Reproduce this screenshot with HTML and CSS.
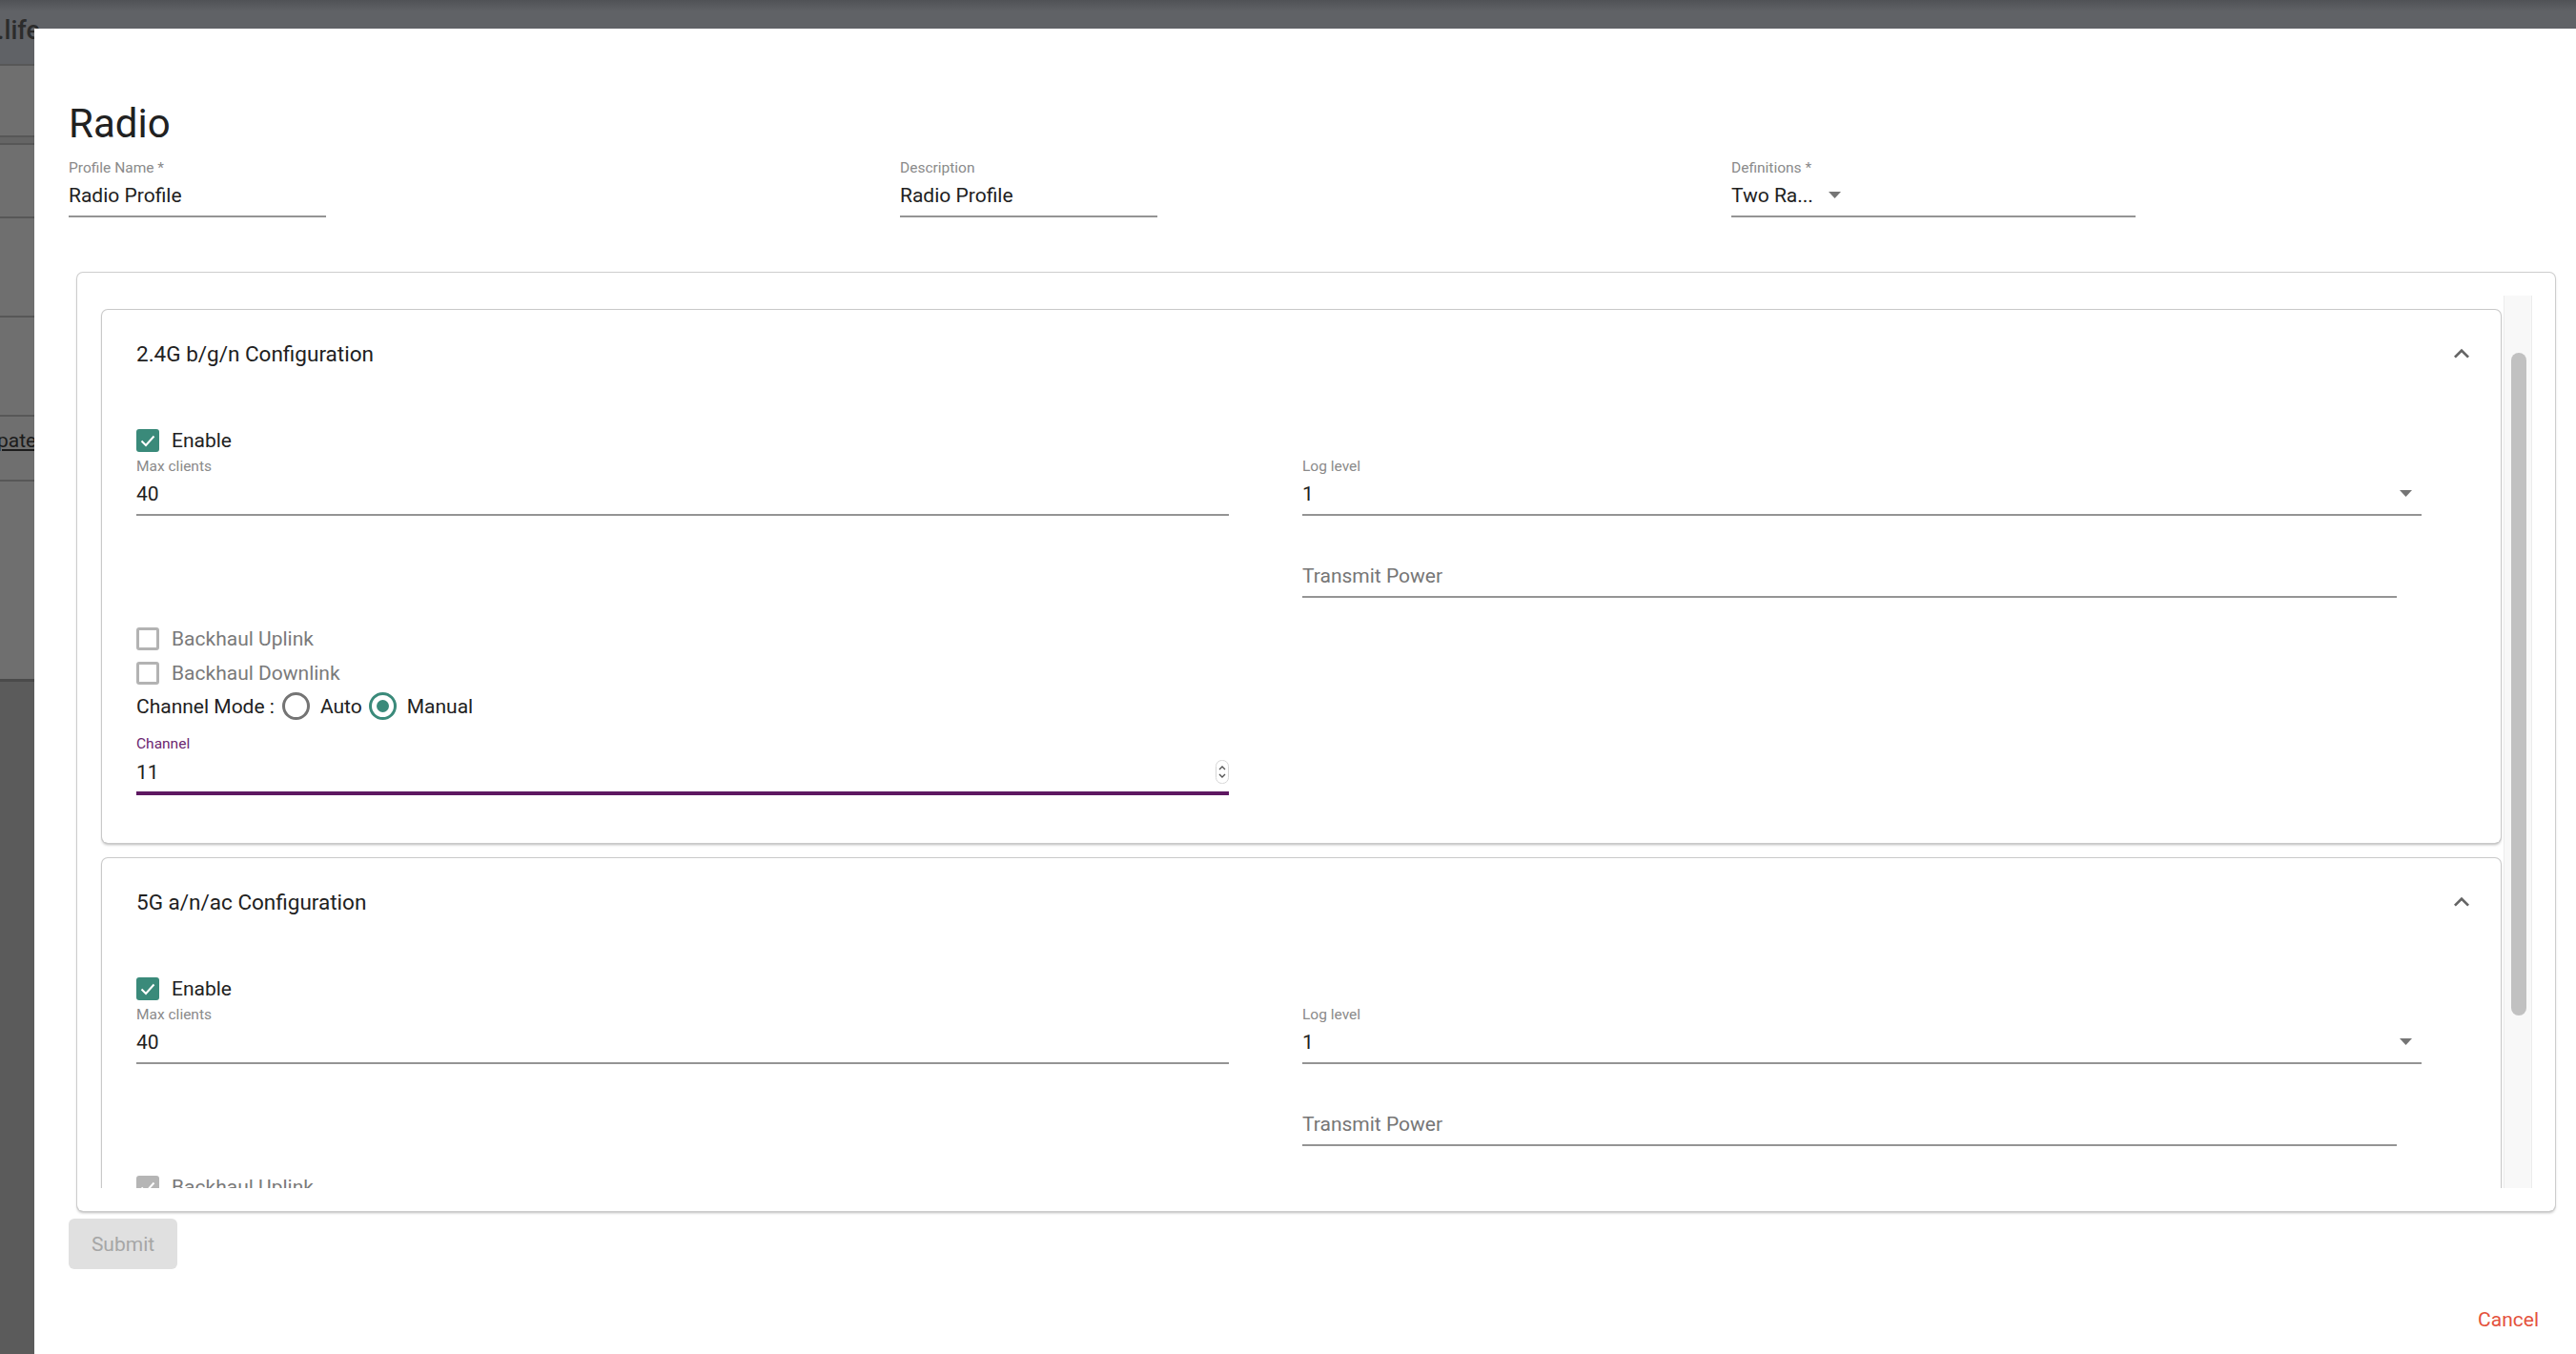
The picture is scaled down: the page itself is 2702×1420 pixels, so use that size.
FILE: index.html
```html
<!DOCTYPE html>
<html lang="en">
<head>
    <meta charset="UTF-8">
    <title>Radio Profile</title>
    <link rel="stylesheet" href="styles.css">
</head>
<body>
<div class="page">
    <div class="strip strip-top"><span class="brand">.life</span></div>
    <div class="strip strip-a"></div>
    <div class="strip strip-thin"></div>
    <div class="strip strip-b"></div>
    <div class="strip strip-c"></div>
    <div class="strip strip-c"></div>
    <div class="strip strip-link"><a class="side-link">pate</a></div>
    <div class="strip strip-d"></div>
    <div class="strip strip-dark"></div>
</div>

<div class="dialog">
    <h1 class="dialog-title">Radio</h1>

    <div class="top-fields">
        <div class="field w-short">
            <label>Profile Name *</label>
            <div class="value">Radio Profile</div>
        </div>
        <div class="field w-short">
            <label>Description</label>
            <div class="value">Radio Profile</div>
        </div>
        <div class="field w-def">
            <label>Definitions *</label>
            <div class="value select-inline">
                <span>Two Ra...</span>
                <svg class="drop" width="13" height="8" viewBox="0 0 13 8"><path d="M0 0h13L6.5 7z" fill="#757575"/></svg>
            </div>
        </div>
    </div>

    <div class="panel">
        <div class="panel-scroll">
            <!-- 2.4G -->
            <section class="card">
                <div class="card-head">
                    <span class="card-title">2.4G b/g/n Configuration</span>
                    <svg class="chev" width="32" height="32" viewBox="0 0 24 24"><path d="M12 8l-6 6 1.41 1.41L12 10.83l4.59 4.58L18 14z" fill="#646464"/></svg>
                </div>
                <div class="check-row enable-row">
                    <span class="cb cb-on"><svg width="24" height="24" viewBox="0 0 24 24"><polyline points="5.5,12.5 10,17 18.5,7.5" fill="none" stroke="#fff" stroke-width="2"/></svg></span>
                    <span>Enable</span>
                </div>
                <div class="grid2">
                    <div class="col">
                        <div class="field w-wide">
                            <label>Max clients</label>
                            <div class="value">40</div>
                        </div>
                    </div>
                    <div class="col">
                        <div class="field w-log">
                            <label>Log level</label>
                            <div class="value select-row">
                                <span>1</span>
                                <svg class="drop" width="13" height="8" viewBox="0 0 13 8"><path d="M0 0h13L6.5 7z" fill="#757575"/></svg>
                            </div>
                        </div>
                        <div class="field w-power">
                            <label>&nbsp;</label>
                            <div class="value placeholder">Transmit Power</div>
                        </div>
                    </div>
                </div>
                <div class="check-list">
                    <div class="check-row muted">
                        <span class="cb cb-off"></span>
                        <span>Backhaul Uplink</span>
                    </div>
                    <div class="check-row muted">
                        <span class="cb cb-off"></span>
                        <span>Backhaul Downlink</span>
                    </div>
                </div>
                <div class="radio-row">
                    <span class="radio-label">Channel Mode :</span>
                    <span class="radio"></span>
                    <span class="radio-text">Auto</span>
                    <span class="radio radio-on"></span>
                    <span class="radio-text">Manual</span>
                </div>
                <div class="field w-wide channel">
                    <label>Channel</label>
                    <div class="value select-row">
                        <span>11</span>
                        <svg width="14" height="25" viewBox="0 0 14 25"><rect x="0.5" y="0.5" width="13" height="24" rx="6" fill="#fff" stroke="#d6d6d6"/><path d="M4 10l3-3 3 3M4 15l3 3 3-3" fill="none" stroke="#555" stroke-width="1.4"/></svg>
                    </div>
                </div>
            </section>

            <!-- 5G -->
            <section class="card">
                <div class="card-head">
                    <span class="card-title">5G a/n/ac Configuration</span>
                    <svg class="chev" width="32" height="32" viewBox="0 0 24 24"><path d="M12 8l-6 6 1.41 1.41L12 10.83l4.59 4.58L18 14z" fill="#646464"/></svg>
                </div>
                <div class="check-row enable-row">
                    <span class="cb cb-on"><svg width="24" height="24" viewBox="0 0 24 24"><polyline points="5.5,12.5 10,17 18.5,7.5" fill="none" stroke="#fff" stroke-width="2"/></svg></span>
                    <span>Enable</span>
                </div>
                <div class="grid2">
                    <div class="col">
                        <div class="field w-wide">
                            <label>Max clients</label>
                            <div class="value">40</div>
                        </div>
                    </div>
                    <div class="col">
                        <div class="field w-log">
                            <label>Log level</label>
                            <div class="value select-row">
                                <span>1</span>
                                <svg class="drop" width="13" height="8" viewBox="0 0 13 8"><path d="M0 0h13L6.5 7z" fill="#757575"/></svg>
                            </div>
                        </div>
                        <div class="field w-power">
                            <label>&nbsp;</label>
                            <div class="value placeholder">Transmit Power</div>
                        </div>
                    </div>
                </div>
                <div class="check-list">
                    <div class="check-row muted">
                        <span class="cb cb-dis"><svg width="24" height="24" viewBox="0 0 24 24"><polyline points="5.5,12.5 10,17 18.5,7.5" fill="none" stroke="#fff" stroke-width="2"/></svg></span>
                        <span>Backhaul Uplink</span>
                    </div>
                    <div class="check-row muted">
                        <span class="cb cb-off"></span>
                        <span>Backhaul Downlink</span>
                    </div>
                </div>
            </section>
        </div>
        <div class="scrollbar"><div class="scrollbar-thumb"></div></div>
    </div>

    <div class="actions">
        <button class="btn-submit" disabled>Submit</button>
    </div>
    <div class="actions-right">
        <button class="btn-cancel">Cancel</button>
    </div>
</div>
</body>
</html>
```

FILE: styles.css
```css
body {
    margin: 0;
    padding: 0;
    width: 2702px;
    height: 1420px;
    overflow: hidden;
    position: relative;
    background: #5c5c5c;
    font-family: Roboto, "Liberation Sans", sans-serif;
}

/* page behind the dialog */
.page {
    display: flex;
    flex-direction: column;
    height: 1420px;
}

.strip {
    background: #6f6f6f;
    border-bottom: 2px solid #575757;
    box-sizing: border-box;
}

.strip-top {
    height: 69px;
    background: linear-gradient(#505256, #606266 12px);
    padding-top: 17px;
}

.brand {
    display: block;
    margin-left: -3px;
    font-size: 27px;
    line-height: 30px;
    font-weight: 500;
    color: #2c2c2c;
}

.strip-a {
    height: 75px;
}

.strip-thin {
    height: 8px;
    background: #656565;
}

.strip-b {
    height: 77px;
}

.strip-c {
    height: 104px;
}

.strip-link {
    height: 68px;
    padding-top: 12px;
}

.side-link {
    display: block;
    margin-left: -3px;
    font-size: 21px;
    line-height: 26px;
    color: #1c1c1c;
    text-decoration: underline;
}

.strip-d {
    height: 210px;
    border-bottom: 3px solid #4a4a4a;
}

.strip-dark {
    flex: 1;
    background: #5b5b5b;
    border: 0;
}

/* dialog */
.dialog {
    position: absolute;
    left: 36px;
    top: 30px;
    width: 2690px;
    height: 1420px;
    box-sizing: border-box;
    padding: 75px 0 0 36px;
    background: #fff;
    color: #212121;
}

.dialog-title {
    margin: 0;
    font-size: 42px;
    line-height: 50px;
    font-weight: 400;
}

.top-fields {
    display: grid;
    grid-template-columns: 872px 872px 872px;
    margin-top: 12px;
}

.field label {
    display: block;
    font-size: 15.5px;
    line-height: 18px;
    color: #8a8a8a;
    margin-bottom: 8px;
}

.field .value {
    font-size: 21px;
    line-height: 24px;
    color: #212121;
    padding-bottom: 9px;
    border-bottom: 2px solid #949494;
}

.w-short {
    width: 270px;
}

.w-def {
    width: 424px;
}

.select-inline {
    display: flex;
    align-items: center;
    gap: 16px;
}

.select-row {
    display: flex;
    align-items: center;
    justify-content: space-between;
}

.select-row .drop {
    margin-right: 10px;
}

.placeholder {
    color: #767676 !important;
}

/* bordered panel with scrolling cards */
.panel {
    display: flex;
    width: 2599px;
    margin: 58px 0 0 9px;
    padding: 24px;
    box-sizing: border-box;
    border-radius: 6px;
    box-shadow: 0 0 0 1px #cdcdcd, 0 2px 3px rgba(0, 0, 0, 0.28);
}

.panel-scroll {
    flex: 1;
    height: 936px;
    overflow: hidden;
    padding: 15px 3px 0 2px;
    box-sizing: border-box;
}

.scrollbar {
    width: 30px;
    height: 936px;
    box-sizing: border-box;
    padding-top: 60px;
    background: #f8f8f8;
    border-left: 1px solid #ececec;
    border-right: 1px solid #ececec;
}

.scrollbar-thumb {
    width: 16px;
    height: 695px;
    margin-left: 7px;
    border-radius: 8px;
    background: #c1c1c1;
}

.card {
    border-radius: 6px;
    box-shadow: 0 0 0 1px #c9c9c9, 0 2px 3px rgba(0, 0, 0, 0.28);
    padding: 34px 25px 50px 36px;
    margin-bottom: 16px;
}

.card-head {
    display: flex;
    align-items: center;
    justify-content: space-between;
    height: 24px;
}

.card-title {
    font-size: 22.5px;
    line-height: 24px;
}

.chev {
    margin: -4px 0;
}

.check-row {
    display: flex;
    align-items: center;
    gap: 13px;
    height: 24px;
    font-size: 21px;
    line-height: 24px;
}

.enable-row {
    margin-top: 67px;
}

.muted {
    color: #7a7a7a;
}

.cb {
    display: block;
    width: 24px;
    height: 24px;
    box-sizing: border-box;
    border-radius: 3px;
}

.cb svg {
    display: block;
}

.cb-on {
    background: #3a8a7a;
}

.cb-dis {
    background: #b5b5b5;
}

.cb-off {
    border: 3px solid #b3b3b3;
}

.grid2 {
    display: grid;
    grid-template-columns: 1223px 1fr;
    margin-top: 6px;
}

.w-wide {
    width: 1146px;
}

.w-log {
    width: 1174px;
}

.w-power {
    width: 1148px;
    margin-top: 25px;
}

.check-list {
    display: flex;
    flex-direction: column;
    gap: 12px;
    margin-top: 31px;
}

.radio-row {
    display: flex;
    align-items: center;
    height: 29px;
    margin-top: 8px;
    font-size: 21px;
    line-height: 24px;
}

.radio {
    width: 29px;
    height: 29px;
    box-sizing: border-box;
    border: 3px solid #747474;
    border-radius: 50%;
    margin-left: 8px;
    display: flex;
    align-items: center;
    justify-content: center;
}

.radio-on {
    border-color: #3a8a7a;
    margin-left: 7px;
}

.radio-on::after {
    content: "";
    width: 13px;
    height: 13px;
    border-radius: 50%;
    background: #3a8a7a;
}

.radio-text {
    margin-left: 11px;
}

.channel {
    margin-top: 16px;
}

.channel label {
    color: #6c2670;
}

.channel .value {
    padding-bottom: 8px;
    border-bottom: 4px solid #5e1861;
}

/* dialog actions */
.actions {
    margin-top: 8px;
}

.btn-submit {
    width: 114px;
    height: 53px;
    padding: 0;
    border: 0;
    border-radius: 6px;
    background: #e0e0e0;
    color: #a6a6a6;
    font-family: Roboto, "Liberation Sans", sans-serif;
    font-size: 21px;
}

.actions-right {
    display: flex;
    justify-content: flex-end;
    width: 2608px;
    box-sizing: border-box;
    padding-right: 17px;
    margin-top: 41px;
}

.btn-cancel {
    padding: 0;
    border: 0;
    background: none;
    color: #e4523d;
    font-family: Roboto, "Liberation Sans", sans-serif;
    font-size: 21px;
    line-height: 24px;
}
```
